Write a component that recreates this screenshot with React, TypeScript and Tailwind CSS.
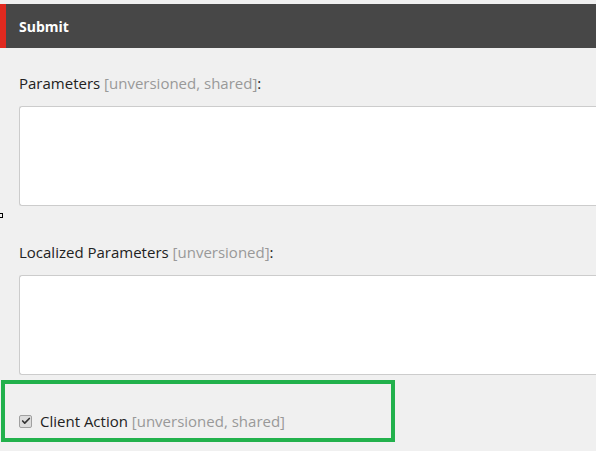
import { Check } from "lucide-react";

function Field({ label, meta }: { label: string; meta: string }) {
  return (
    <div className="flex flex-col">
      <label className="text-[15px] leading-[20px] text-[#222]">
        {label} <span className="text-[#999]">[{meta}]</span>:
      </label>
      <div className="mt-[13px] h-[100px] rounded-l-[3px] border border-r-0 border-[#cccccc] bg-white" />
    </div>
  );
}

export default function App() {
  return (
    <div
      className="relative h-[451px] w-[596px] overflow-hidden bg-[#f0f0f0] pt-[4px]"
      style={{ fontFamily: '"Open Sans", "Noto Sans", sans-serif' }}
    >
      <div className="flex h-[44px] items-center bg-[#474747]">
        <div className="h-full w-[6px] bg-[#e0291f]" />
        <span className="pl-[13px] text-[14px] font-bold text-white">Submit</span>
      </div>

      <div className="flex flex-col pl-[19px] pt-[25px]">
        <Field label="Parameters" meta="unversioned, shared" />
        <div className="mt-[36px]">
          <Field label="Localized Parameters" meta="unversioned" />
        </div>
        <div className="mt-[36px] flex items-center gap-[8px]">
          <span className="flex h-[13px] w-[13px] items-center justify-center rounded-[2px] border border-[#a0a0a0] bg-[#dcdcdc]">
            <Check className="h-[10px] w-[10px] text-[#333]" strokeWidth={4} />
          </span>
          <span className="text-[15px] leading-[20px] text-[#222]">
            Client Action <span className="text-[#999]">[unversioned, shared]</span>
          </span>
        </div>
      </div>

      <div className="absolute left-0 top-[213px] h-[5px] w-[3px] border border-l-0 border-black" />
      <div className="absolute left-[1px] top-[380px] h-[62px] w-[394px] border-4 border-[#22b14c]" />
    </div>
  );
}
